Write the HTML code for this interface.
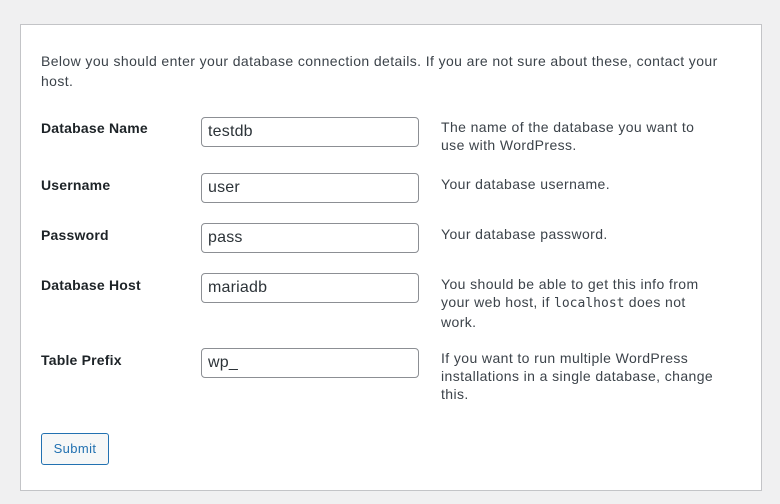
<!DOCTYPE html>
<html><head><meta charset="utf-8"><style>
body{margin:0;background:#f0f0f1;width:780px;height:504px;font-family:"Liberation Sans",sans-serif;font-size:14px;color:#3c434a;position:relative;overflow:hidden;letter-spacing:0.4px}
.box{position:absolute;left:20px;top:24px;width:740px;height:465px;background:#fff;border:1px solid #c3c4c7}
.a{position:absolute;line-height:18.2px;white-space:nowrap}
.l{left:41px;font-weight:bold;color:#1d2327;letter-spacing:0.2px}
.i{position:absolute;left:201px;height:28px;border:1px solid #8c8f94;border-radius:4px;background:#fff;font-size:16px;line-height:28px;padding-left:6px;width:210px;color:#2c3338;letter-spacing:0.2px}
.d{left:441px}
code{font-family:"DejaVu Sans Mono",monospace;font-size:13px;letter-spacing:0}
.btn{position:absolute;left:41px;top:433px;width:66px;height:30px;border:1px solid #2271b1;border-radius:3px;background:#f6f7f7;color:#2271b1;font-size:13px;line-height:30px;text-align:center}
</style></head><body>
<div class="box"></div>
<div class="a" style="left:41px;top:51px;line-height:20px">Below you should enter your database connection details. If you are not sure about these, contact your<br>host.</div>
<div class="a l" style="top:119px">Database Name</div>
<div class="i" style="top:117px">testdb</div>
<div class="a d" style="top:118px">The name of the database you want to<br>use with WordPress.</div>
<div class="a l" style="top:176px">Username</div>
<div class="i" style="top:173px">user</div>
<div class="a d" style="top:175px">Your database username.</div>
<div class="a l" style="top:226px">Password</div>
<div class="i" style="top:223px">pass</div>
<div class="a d" style="top:225px">Your database password.</div>
<div class="a l" style="top:276px">Database Host</div>
<div class="i" style="top:273px">mariadb</div>
<div class="a d" style="top:275px">You should be able to get this info from<br>your web host, if <code>localhost</code> does not<br>work.</div>
<div class="a l" style="top:351px">Table Prefix</div>
<div class="i" style="top:348px">wp_</div>
<div class="a d" style="top:349px">If you want to run multiple WordPress<br>installations in a single database, change<br>this.</div>
<div class="btn">Submit</div>
</body></html>
